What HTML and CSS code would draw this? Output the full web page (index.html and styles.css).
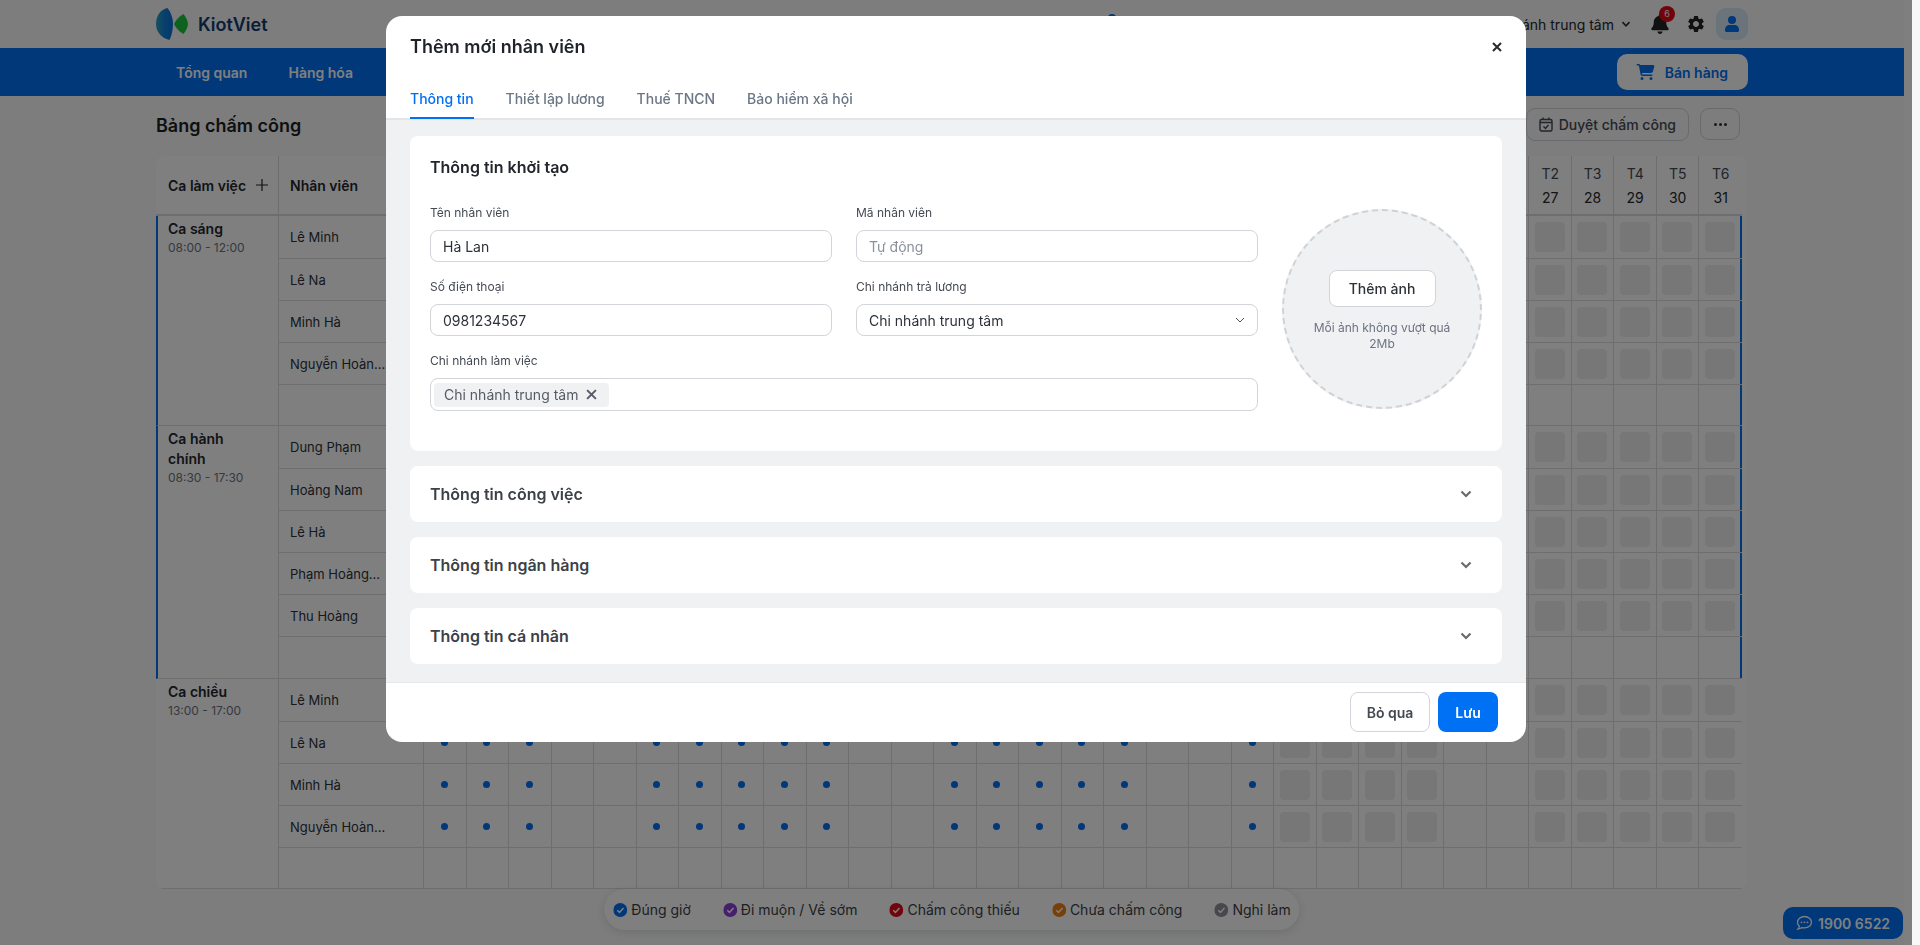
FILE: index.html
```html
<!DOCTYPE html>
<html lang="vi">
<head>
    <meta charset="UTF-8">
    <meta name="viewport" content="width=device-width, initial-scale=1.0">
    <title>Bảng chấm công - KiotViet</title>
    <link rel="stylesheet" href="styles.css">
</head>
<body>
    <div class="page">
        <header class="topbar">
            <div class="logo">
                <svg class="logo-mark" width="32" height="32" viewBox="0 0 32 32">
                    <defs>
                        <linearGradient id="logoBlue" x1="0" y1="0" x2="1" y2="0">
                            <stop offset="0" stop-color="#2aa0c4"/>
                            <stop offset="0.5" stop-color="#1080d8"/>
                            <stop offset="1" stop-color="#0a6ee0"/>
                        </linearGradient>
                    </defs>
                    <path fill="url(#logoBlue)" d="M11.5 0C4.5 1.5 0 8 0 16c0 7.5 5 14 13.5 16C15.8 27 17 21.5 17 16c0-6-2-11.5-5.5-16z"/>
                    <path fill="#1fc43a" d="M18 16c1.5-3.5 4.5-7 9.5-10 2 3 4.5 6.5 4.5 10s-2.5 7-4.5 10c-5-3-8-6.5-9.5-10z"/>
                </svg>
                <span class="logo-text">KiotViet</span>
            </div>
            <span class="top-blip"></span>
            <div class="topbar-right">
                <span class="branch">Chi nhánh trung tâm</span>
                <svg class="branch-caret" width="10" height="10" viewBox="0 0 10 10"><path d="M1.5 3.2 5 6.8l3.5-3.6" fill="none" stroke="currentColor" stroke-width="1.7"/></svg>
                <span class="bell">
                    <svg width="18" height="20" viewBox="0 0 448 512"><path fill="currentColor" d="M224 0c-17.7 0-32 14.3-32 32V51.2C119 66 64 130.6 64 208v18.8c0 47-17.3 92.4-48.5 127.6l-7.4 8.3c-8.4 9.4-10.4 22.9-5.3 34.4S19.4 416 32 416H416c12.6 0 24-7.4 29.2-18.9s3.1-25-5.3-34.4l-7.4-8.3C401.3 319.2 384 273.9 384 226.8V208c0-77.4-55-142-128-156.8V32c0-17.7-14.3-32-32-32zm45.3 493.3c12-12 18.7-28.3 18.7-45.3H224 160c0 17 6.7 33.3 18.7 45.3s28.3 18.7 45.3 18.7s33.3-6.7 45.3-18.7z"/></svg>
                    <span class="bell-badge">6</span>
                </span>
                <svg class="gear" width="20" height="20" viewBox="0 0 24 24"><path fill="currentColor" d="M19.14 12.94c.04-.3.06-.61.06-.94 0-.32-.02-.64-.07-.94l2.03-1.58c.18-.14.23-.41.12-.61l-1.92-3.32c-.12-.22-.37-.29-.59-.22l-2.39.96c-.5-.38-1.03-.7-1.62-.94l-.36-2.54c-.04-.24-.24-.41-.48-.41h-3.84c-.24 0-.43.17-.47.41l-.36 2.54c-.59.24-1.13.57-1.62.94l-2.39-.96c-.22-.08-.47 0-.59.22L2.74 8.87c-.12.21-.08.47.12.61l2.03 1.58c-.05.3-.09.63-.09.94s.02.64.07.94l-2.03 1.58c-.18.14-.23.41-.12.61l1.92 3.32c.12.22.37.29.59.22l2.39-.96c.5.38 1.03.7 1.62.94l.36 2.54c.05.24.24.41.48.41h3.84c.24 0 .44-.17.47-.41l.36-2.54c.59-.24 1.13-.56 1.62-.94l2.39.96c.22.08.47 0 .59-.22l1.92-3.32c.12-.22.07-.47-.12-.61l-2.01-1.58zM12 15.6c-1.98 0-3.6-1.62-3.6-3.6s1.62-3.6 3.6-3.6 3.6 1.62 3.6 3.6-1.62 3.6-3.6 3.6z"/></svg>
                <span class="avatar">
                    <svg width="14" height="16" viewBox="0 0 14 16"><circle cx="7" cy="4" r="4" fill="currentColor"/><path fill="currentColor" d="M0 14c0-3.3 2.2-5 4.5-5h5C11.8 9 14 10.7 14 14v.5c0 .8-.7 1.5-1.5 1.5h-11C.7 16 0 15.3 0 14.5z"/></svg>
                </span>
            </div>
        </header>

        <nav class="navbar">
            <a class="nav-link">Tổng quan</a>
            <a class="nav-link">Hàng hóa</a>
            <button class="sell-btn">
                <svg width="19" height="16" viewBox="0 0 576 512"><path fill="currentColor" d="M0 24C0 10.7 10.7 0 24 0H69.5c22 0 41.5 12.8 50.6 32h411c26.3 0 45.5 25 38.6 50.4l-41 152.3c-8.5 31.4-37 53.3-69.5 53.3H170.7l5.4 28.5c2.2 11.3 12.1 19.5 23.6 19.5H488c13.3 0 24 10.7 24 24s-10.7 24-24 24H199.7c-34.6 0-64.3-24.6-70.7-58.5L77.4 54.5c-.7-3.8-4-6.5-7.9-6.5H24C10.7 48 0 37.3 0 24zM128 464a48 48 0 1 1 96 0 48 48 0 1 1 -96 0zm336-48a48 48 0 1 1 0 96 48 48 0 1 1 0-96z"/></svg>
                Bán hàng
            </button>
        </nav>

        <main class="content">
            <div class="toolbar">
                <h1>Bảng chấm công</h1>
                <div class="toolbar-actions">
                    <button class="tool-btn">
                        <svg width="14" height="15" viewBox="0 0 14 15" fill="none" stroke="currentColor" stroke-width="1.4"><rect x="1" y="2.5" width="12" height="11.5" rx="1.5"/><path d="M1 5.5h12M4 .5v2.500M10 .5v2.500M4.500 9.500l2 2 3-3.500"/></svg>
                        Duyệt chấm công
                    </button>
                    <button class="more-btn"><span></span><span></span><span></span></button>
                </div>
            </div>

            <div class="sheet-wrap">
                <div class="sheet" id="sheet"></div>
            </div>
        </main>

        <div class="legend">
            <span class="legend-item on-time"><svg width="14" height="14" viewBox="0 0 14 14"><circle cx="7" cy="7" r="7" fill="currentColor"/><path d="M4 7.2l2.2 2.2L10.2 5" fill="none" stroke="#fff" stroke-width="1.5"/></svg>Đúng giờ</span>
            <span class="legend-item late"><svg width="14" height="14" viewBox="0 0 14 14"><circle cx="7" cy="7" r="7" fill="currentColor"/><path d="M4 7.2l2.2 2.2L10.2 5" fill="none" stroke="#fff" stroke-width="1.5"/></svg>Đi muộn / Về sớm</span>
            <span class="legend-item missing"><svg width="14" height="14" viewBox="0 0 14 14"><circle cx="7" cy="7" r="7" fill="currentColor"/><path d="M4 7.2l2.2 2.2L10.2 5" fill="none" stroke="#fff" stroke-width="1.5"/></svg>Chấm công thiếu</span>
            <span class="legend-item pending"><svg width="14" height="14" viewBox="0 0 14 14"><circle cx="7" cy="7" r="7" fill="currentColor"/><path d="M4 7.2l2.2 2.2L10.2 5" fill="none" stroke="#fff" stroke-width="1.5"/></svg>Chưa chấm công</span>
            <span class="legend-item off"><svg width="14" height="14" viewBox="0 0 14 14"><circle cx="7" cy="7" r="7" fill="currentColor"/><path d="M4 7.2l2.2 2.2L10.2 5" fill="none" stroke="#fff" stroke-width="1.5"/></svg>Nghỉ làm</span>
        </div>

        <div class="hotline">
            <svg width="17" height="16" viewBox="0 0 17 16" fill="none"><path d="M8.5 1.5c-4 0-7 2.5-7 5.8 0 1.6.7 3 1.9 4-.1 1-.6 1.9-1.4 2.7 1.5-.1 2.8-.6 3.8-1.4.8.2 1.7.3 2.7.3 4 0 7-2.5 7-5.6s-3-5.8-7-5.8z" stroke="currentColor" stroke-width="1.3"/><circle cx="5.5" cy="7.3" r=".9" fill="currentColor"/><circle cx="8.5" cy="7.3" r=".9" fill="currentColor"/><circle cx="11.5" cy="7.3" r=".9" fill="currentColor"/></svg>
            1900 6522
        </div>
    </div>
    <div class="page-track"></div>

    <div class="backdrop">
        <div class="modal">
            <div class="modal-head">
                <h2>Thêm mới nhân viên</h2>
                <svg class="modal-close" width="12" height="12" viewBox="0 0 12 12"><path d="M2 2l8 8M10 2l-8 8" stroke="currentColor" stroke-width="2"/></svg>
            </div>
            <div class="tabs">
                <a class="tab active">Thông tin</a>
                <a class="tab">Thiết lập lương</a>
                <a class="tab">Thuế TNCN</a>
                <a class="tab">Bảo hiểm xã hội</a>
            </div>

            <div class="modal-body">
                <section class="card">
                    <h3>Thông tin khởi tạo</h3>
                    <div class="card-row">
                        <div class="form-grid">
                            <div class="field">
                                <label>Tên nhân viên</label>
                                <div class="input">Hà Lan</div>
                            </div>
                            <div class="field">
                                <label>Mã nhân viên</label>
                                <div class="input placeholder">Tự động</div>
                            </div>
                            <div class="field">
                                <label>Số điện thoại</label>
                                <div class="input">0981234567</div>
                            </div>
                            <div class="field">
                                <label>Chi nhánh trả lương</label>
                                <div class="input select">
                                    Chi nhánh trung tâm
                                    <svg width="10" height="10" viewBox="0 0 10 10"><path d="M1 3l4 4 4-4" fill="none" stroke="currentColor" stroke-width="1"/></svg>
                                </div>
                            </div>
                            <div class="field wide">
                                <label>Chi nhánh làm việc</label>
                                <div class="input multi">
                                    <span class="tag">Chi nhánh trung tâm
                                        <svg width="11" height="11" viewBox="0 0 10 10"><path d="M1 1l8 8M9 1l-8 8" stroke="currentColor" stroke-width="1.8"/></svg>
                                    </span>
                                </div>
                            </div>
                        </div>
                        <div class="photo">
                            <button class="photo-btn">Thêm ảnh</button>
                            <p>Mỗi ảnh không vượt quá 2Mb</p>
                        </div>
                    </div>
                </section>

                <section class="card fold">
                    <h3>Thông tin công việc</h3>
                    <svg width="12" height="8" viewBox="0 0 12 8"><path d="M1.5 1.5 6 6l4.5-4.5" fill="none" stroke="currentColor" stroke-width="2.2"/></svg>
                </section>
                <section class="card fold">
                    <h3>Thông tin ngân hàng</h3>
                    <svg width="12" height="8" viewBox="0 0 12 8"><path d="M1.5 1.5 6 6l4.5-4.5" fill="none" stroke="currentColor" stroke-width="2.2"/></svg>
                </section>
                <section class="card fold">
                    <h3>Thông tin cá nhân</h3>
                    <svg width="12" height="8" viewBox="0 0 12 8"><path d="M1.5 1.5 6 6l4.5-4.5" fill="none" stroke="currentColor" stroke-width="2.2"/></svg>
                </section>
            </div>

            <div class="modal-foot">
                <button class="btn-ghost">Bỏ qua</button>
                <button class="btn-primary">Lưu</button>
            </div>
        </div>
    </div>

    <script src="script.js"></script>
</body>
</html>
```

FILE: styles.css
```css
:root {
    --blue: #0070f4;
    --line: #dcdcdc;
    --text: #23272d;
    --muted: #6b7280;
    --border: #d1d4d9;
    --soft: #f0f1f3;
}

* {
    box-sizing: border-box;
    margin: 0;
    padding: 0;
    font-family: 'Inter', 'Liberation Sans', sans-serif;
}

body {
    display: flex;
    height: 945px;
    overflow: hidden;
    background: #f8f8f8;
    color: var(--text);
    font-size: 14px;
}

button {
    font-size: 14px;
    background: #fff;
    border: 0;
}

.page {
    position: relative;
    width: 1904px;
    height: 945px;
    background: #f8faf9;
    flex-shrink: 0;
}

.page-track {
    width: 8px;
    background: #fff;
    flex-shrink: 0;
}

/* top bar */
.topbar {
    position: relative;
    display: flex;
    align-items: center;
    justify-content: space-between;
    height: 48px;
    padding: 0 156px;
}

.logo {
    display: flex;
    align-items: center;
    gap: 10px;
}

.logo-text {
    font-size: 18px;
    font-weight: 600;
    color: #123a70;
}

.top-blip {
    position: absolute;
    top: 14px;
    left: 1108px;
    width: 8px;
    height: 8px;
    border-radius: 50%;
    background: var(--blue);
}

.topbar-right {
    display: flex;
    align-items: center;
}

.branch-caret {
    margin-left: 7px;
    color: #333;
}

.bell {
    position: relative;
    display: flex;
    margin-left: 20px;
    color: #222;
}

.bell-badge {
    position: absolute;
    top: -8px;
    right: -6px;
    width: 16px;
    height: 16px;
    border-radius: 50%;
    background: #e00814;
    color: #fff;
    font-size: 9px;
    line-height: 16px;
    text-align: center;
}

.gear {
    margin-left: 17px;
    color: #222;
}

.avatar {
    display: flex;
    align-items: center;
    justify-content: center;
    width: 32px;
    height: 32px;
    margin-left: 10px;
    border-radius: 10px;
    background: #d7e6f7;
    color: var(--blue);
}

/* nav */
.navbar {
    display: flex;
    align-items: center;
    gap: 41px;
    height: 48px;
    padding: 0 156px 0 176px;
    background: var(--blue);
}

.nav-link {
    color: #fff;
    font-weight: 600;
}

.sell-btn {
    display: flex;
    align-items: center;
    gap: 10px;
    height: 36px;
    margin-left: auto;
    padding: 0 20px 0 19px;
    border-radius: 10px;
    color: var(--blue);
    font-weight: 600;
}

/* content */
.content {
    padding: 12px 0 0 156px;
}

.toolbar {
    display: flex;
    align-items: flex-start;
    justify-content: space-between;
    width: 1584px;
    height: 48px;
}

.toolbar h1 {
    margin-top: 7px;
    font-size: 18px;
    line-height: 22px;
    font-weight: 600;
    color: #1b1f24;
}

.toolbar-actions {
    display: flex;
    gap: 11px;
}

.tool-btn {
    display: flex;
    align-items: center;
    gap: 6px;
    height: 33px;
    padding: 0 12px;
    border: 1px solid var(--border);
    border-radius: 9px;
    background: none;
    color: #444a52;
    font-weight: 500;
}

.more-btn {
    display: flex;
    align-items: center;
    justify-content: center;
    gap: 2px;
    width: 40px;
    height: 32px;
    border: 1px solid var(--border);
    border-radius: 9px;
    background: none;
}

.more-btn span {
    width: 3px;
    height: 3px;
    border-radius: 50%;
    background: #333;
}

.sheet-wrap {
    width: 1591px;
    height: 733px;
    border-radius: 8px;
    background: #fff;
    overflow: hidden;
}

.sheet {
    display: grid;
    grid-template-columns: 123px 145px repeat(31, 1fr);
    grid-template-rows: 60px 43px 42px 42px 42px 41px 43px 42px 42px 42px 42px 42px 43px 42px 42px 42px 41px;
    width: 1586px;
}

.cell {
    display: flex;
    align-items: center;
    justify-content: center;
    border-right: 1px solid var(--line);
    border-bottom: 1px solid var(--line);
}

.cell.last {
    border-right: 0;
}

.head {
    flex-direction: column;
    gap: 7px;
    border-bottom-width: 2px;
    font-size: 14px;
    line-height: 17px;
    color: #23272d;
}

.head .weekday {
    color: #444a52;
}

.head.title {
    flex-direction: row;
    justify-content: flex-start;
    gap: 10px;
    padding-left: 12px;
    font-weight: 600;
}

.head.title.staff {
    padding-left: 11px;
}

.head.title svg {
    color: #222;
}

.shift {
    display: block;
    padding: 3px 12px 0;
}

.shift b {
    display: block;
    max-width: 84px;
    font-size: 14px;
    line-height: 20px;
    font-weight: 600;
}

.shift small {
    display: block;
    font-size: 12px;
    line-height: 17px;
    color: #6b7280;
}

.shift.marked {
    border-left: 2px solid var(--blue);
    padding-left: 10px;
}

.name {
    justify-content: flex-start;
    padding-left: 11px;
    font-size: 13px;
    color: #2d3138;
}

.day {
    padding-right: 1px;
}

.cell.marked-end {
    box-shadow: inset -2px 0 0 var(--blue);
}

.dot {
    width: 7px;
    height: 7px;
    border-radius: 50%;
    background: var(--blue);
}

.slot {
    width: 30px;
    height: 30px;
    border-radius: 4px;
    background: #eeeeee;
}

/* legend + hotline float over the sheet */
.legend {
    position: absolute;
    left: 50%;
    bottom: 15px;
    display: flex;
    align-items: center;
    gap: 32px;
    height: 41px;
    padding: 0 9px;
    transform: translateX(-50%);
    border-radius: 21px;
    background: #fff;
    box-shadow: 0 2px 10px rgba(0, 0, 0, 0.12);
}

.legend-item {
    display: flex;
    align-items: center;
    gap: 4px;
    white-space: nowrap;
    font-size: 14px;
    color: #3a3f47;
}

.legend-item svg {
    flex-shrink: 0;
}

.on-time svg { color: var(--blue); }
.late svg { color: #8b3ed6; }
.missing svg { color: #e2061a; }
.pending svg { color: #f07f10; }
.off svg { color: #8d9199; }

.hotline {
    position: absolute;
    right: 1px;
    bottom: 6px;
    display: flex;
    align-items: center;
    gap: 5px;
    width: 120px;
    height: 32px;
    padding-left: 13px;
    border-radius: 10px;
    background: var(--blue);
    color: #fff;
    font-weight: 600;
}

/* modal */
.backdrop {
    position: fixed;
    top: 0;
    left: 0;
    display: flex;
    justify-content: center;
    width: 1912px;
    height: 945px;
    padding-top: 16px;
    background: rgba(0, 0, 0, 0.5);
}

.modal {
    display: flex;
    flex-direction: column;
    width: 1140px;
    height: 726px;
    border-radius: 16px;
    background: #fff;
    overflow: hidden;
}

.modal-head {
    display: flex;
    align-items: center;
    justify-content: space-between;
    height: 63px;
    padding: 0 24px;
    padding-bottom: 2px;
}

.modal-head h2 {
    font-size: 18px;
    font-weight: 600;
    color: #1f2329;
}

.modal-close {
    margin-right: -1px;
    color: #2a2a2a;
}

.tabs {
    display: flex;
    align-items: flex-start;
    gap: 32px;
    height: 41px;
    padding: 0 24px;
    border-bottom: 2px solid #e3e5e8;
}

.tab {
    height: 40px;
    line-height: 40px;
    border-bottom: 2px solid transparent;
    font-weight: 500;
    color: #6b7686;
}

.tab.active {
    border-bottom-color: var(--blue);
    color: var(--blue);
}

.modal-body {
    display: flex;
    flex-direction: column;
    flex: 1;
    gap: 15px;
    padding: 16px 24px 0;
    background: var(--soft);
}

.card {
    padding: 19px 20px 40px;
    border-radius: 8px;
    background: #fff;
}

.card h3 {
    font-size: 16px;
    line-height: 24px;
    font-weight: 600;
    color: #22262c;
}

.card-row {
    display: flex;
    align-items: flex-start;
    justify-content: space-between;
    margin-top: 26px;
}

.form-grid {
    display: grid;
    grid-template-columns: 402px 402px;
    column-gap: 24px;
    row-gap: 17px;
}

.field.wide {
    grid-column: 1 / 3;
}

.field label {
    display: block;
    margin-bottom: 9px;
    font-size: 12px;
    line-height: 16px;
    color: #444a52;
}

.input {
    display: flex;
    align-items: center;
    height: 32px;
    padding: 0 12px;
    border: 1px solid var(--border);
    border-radius: 8px;
    background: #fff;
    color: #2d3138;
}

.input.placeholder {
    color: #8a919c;
}

.input.select {
    justify-content: space-between;
}

.input.select svg {
    color: #555;
}

.input.multi {
    height: 33px;
    padding: 0 3px;
}

.tag {
    display: flex;
    align-items: center;
    gap: 8px;
    height: 24px;
    padding: 0 12px 0 10px;
    border-radius: 4px;
    background: var(--soft);
    color: #555c67;
}

.photo {
    display: flex;
    flex-direction: column;
    align-items: center;
    justify-content: center;
    width: 200px;
    height: 200px;
    margin-top: 4px;
    padding-top: 3px;
    border: 2px dashed #cfd2d7;
    border-radius: 50%;
    background: var(--soft);
}

.photo-btn {
    width: 107px;
    height: 37px;
    border: 1px solid var(--border);
    border-radius: 8px;
    font-weight: 500;
    color: #2d3138;
}

.photo p {
    width: 150px;
    margin-top: 13px;
    font-size: 12px;
    line-height: 16px;
    text-align: center;
    color: var(--muted);
}

.card.fold {
    display: flex;
    align-items: center;
    justify-content: space-between;
    height: 56px;
    padding: 0 30px 0 20px;
}

.card.fold h3 {
    color: #3c4148;
}

.card.fold svg {
    color: #6b6b6b;
}

.modal-foot {
    display: flex;
    align-items: flex-start;
    justify-content: flex-end;
    gap: 8px;
    height: 60px;
    padding: 9px 28px 0 0;
    border-top: 1px solid #e8e9ec;
}

.btn-ghost,
.btn-primary {
    height: 40px;
    border-radius: 8px;
    font-weight: 600;
}

.btn-ghost {
    width: 80px;
    border: 1px solid var(--border);
    color: #444a52;
}

.btn-primary {
    width: 60px;
    background: var(--blue);
    color: #fff;
}
```

FILE: script.js
```js
const shifts = [
    { name: 'Ca sáng', time: '08:00 - 12:00', marked: true, people: ['Lê Minh', 'Lê Na', 'Minh Hà', 'Nguyễn Hoàn...', ''] },
    { name: 'Ca hành chính', time: '08:30 - 17:30', marked: true, people: ['Dung Phạm', 'Hoàng Nam', 'Lê Hà', 'Phạm Hoàng...', 'Thu Hoàng', ''] },
    { name: 'Ca chiều', time: '13:00 - 17:00', marked: false, people: ['Lê Minh', 'Lê Na', 'Minh Hà', 'Nguyễn Hoàn...', ''] }
];

const weekdays = ['CN', 'T2', 'T3', 'T4', 'T5', 'T6', 'T7'];
const today = 20;
const firstVisibleDay = 27; // earlier day headers sit behind the open modal
const sheet = document.getElementById('sheet');

function addCell(className, html) {
    const cell = document.createElement('div');
    cell.className = 'cell ' + className;
    if (html) cell.innerHTML = html;
    sheet.appendChild(cell);
    return cell;
}

addCell('head title', 'Ca làm việc <svg width="12" height="12" viewBox="0 0 12 12"><path d="M6 0v12M0 6h12" stroke="currentColor" stroke-width="1.2"/></svg>');
addCell('head title staff', 'Nhân viên');

for (let day = 1; day <= 31; day++) {
    const name = weekdays[(day + 2) % 7];
    const label = day >= firstVisibleDay ? '<span class="weekday">' + name + '</span><span>' + day + '</span>' : '';
    addCell('head' + (day === 31 ? ' last' : ''), label);
}

shifts.forEach(shift => {
    shift.people.forEach((person, row) => {
        if (row === 0) {
            const cell = addCell('shift' + (shift.marked ? ' marked' : ''), '<b>' + shift.name + '</b><small>' + shift.time + '</small>');
            cell.style.gridRow = 'span ' + shift.people.length;
        }
        addCell('name', person);
        for (let day = 1; day <= 31; day++) {
            const weekend = (day + 2) % 7 === 0 || (day + 2) % 7 === 6;
            let inner = '';
            if (person && !weekend) {
                inner = day <= today ? '<span class="dot"></span>' : '<span class="slot"></span>';
            }
            let cls = 'day';
            if (day === 31) cls += ' last';
            if (day === 31 && shift.marked) cls += ' marked-end';
            addCell(cls, inner);
        }
    });
});
```
